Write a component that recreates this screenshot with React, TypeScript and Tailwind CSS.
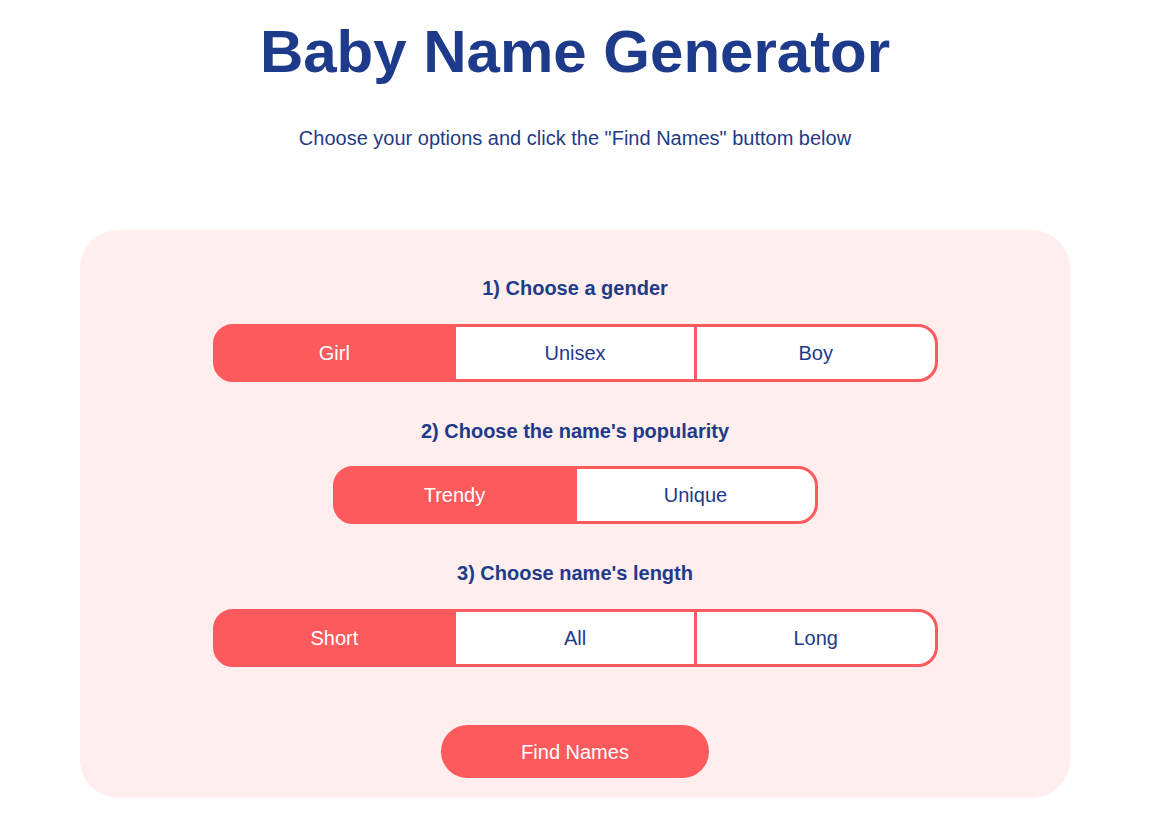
import { useState } from "react";

const RED = "bg-[#fc5a5c]";

function Toggle({
  options,
  value,
  onChange,
  width,
}: {
  options: string[];
  value: string;
  onChange: (v: string) => void;
  width: string;
}) {
  return (
    <div
      className={`${width} flex h-[58px] gap-[3px] overflow-hidden rounded-[20px] border-[3px] border-[#fc5a5c] ${RED}`}
    >
      {options.map((o) => (
        <button
          key={o}
          onClick={() => onChange(o)}
          className={`flex flex-1 items-center justify-center text-[20px] ${
            value === o ? "bg-[#fc5a5c] text-white" : "bg-white text-[#1e3a8a]"
          }`}
        >
          {o}
        </button>
      ))}
    </div>
  );
}

export default function App() {
  const [gender, setGender] = useState("Girl");
  const [pop, setPop] = useState("Trendy");
  const [len, setLen] = useState("Short");

  return (
    <div className="flex w-[1150px] flex-col items-center bg-white pt-[22px] font-['Liberation_Sans',Arial,sans-serif] text-[#1e3a8a]">
      <h1 className="text-[60px] leading-[60px] font-bold">Baby Name Generator</h1>
      <p className="mt-[44px] text-[20px] leading-[24px] text-[#1f3b85]">
        Choose your options and click the "Find Names" buttom below
      </p>

      <div className="mt-[80px] flex w-[990px] flex-col items-center rounded-[38px] bg-[#ffeeed] pt-[47px] pb-[20px]">
        <h2 className="text-[20px] leading-[22px] font-bold">1) Choose a gender</h2>
        <div className="mt-[25px]">
          <Toggle options={["Girl", "Unisex", "Boy"]} value={gender} onChange={setGender} width="w-[725px]" />
        </div>

        <h2 className="mt-[38px] text-[20px] leading-[22px] font-bold">2) Choose the name's popularity</h2>
        <div className="mt-[24px]">
          <Toggle options={["Trendy", "Unique"]} value={pop} onChange={setPop} width="w-[485px]" />
        </div>

        <h2 className="mt-[38px] text-[20px] leading-[22px] font-bold">3) Choose name's length</h2>
        <div className="mt-[25px]">
          <Toggle options={["Short", "All", "Long"]} value={len} onChange={setLen} width="w-[725px]" />
        </div>

        <button className="mt-[58px] h-[53px] w-[268px] rounded-full bg-[#fc5a5c] text-[20px] text-white">
          Find Names
        </button>
      </div>
    </div>
  );
}
